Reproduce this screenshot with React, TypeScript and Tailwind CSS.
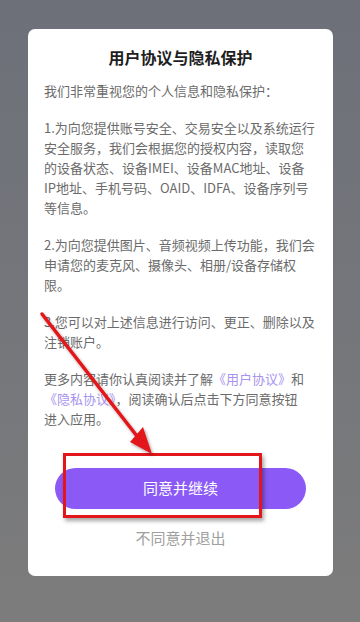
import React from "react";

const font = { fontFamily: '"Noto Sans CJK SC", "Noto Sans", sans-serif' };

export default function App() {
  return (
    <div
      className="relative w-[360px] h-[622px] overflow-hidden bg-gradient-to-b from-[#6d7079] to-[#7c7c7c] pt-[29px]"
      style={font}
    >
      <div className="mx-[28px] w-[305px] h-[547px] rounded-[7px] bg-white px-[16px] pt-[17px] flex flex-col">
        <div className="text-center text-[16px] leading-[22px] font-bold text-[#1e1e1e]">
          用户协议与隐私保护
        </div>
        <div className="mt-[13px] text-[13px] leading-[20px] text-[#6b6b6b] whitespace-nowrap">
          <p>我们非常重视您的个人信息和隐私保护：</p>
          <p className="mt-[17px]">
            1.为向您提供账号安全、交易安全以及系统运行
            <br />
            安全服务，我们会根据您的授权内容，读取您
            <br />
            的设备状态、设备IMEI、设备MAC地址、设备
            <br />
            IP地址、手机号码、OAID、IDFA、设备序列号
            <br />
            等信息。
          </p>
          <p className="mt-[17px]">
            2.为向您提供图片、音频视频上传功能，我们会
            <br />
            申请您的麦克风、摄像头、相册/设备存储权
            <br />
            限。
          </p>
          <p className="mt-[17px]">
            3.您可以对上述信息进行访问、更正、删除以及
            <br />
            注销账户。
          </p>
          <p className="mt-[17px]">
            更多内容请你认真阅读并了解<span className="text-[#a793ef]">《用户协议》</span>和
            <br />
            <span className="text-[#a793ef]">《隐私协议》</span>，阅读确认后点击下方同意按钮
            <br />
            进入应用。
          </p>
        </div>
        <button className="mt-[39px] mx-[11px] h-[41px] rounded-full bg-[#8b59f6] text-white text-[15px] flex items-center justify-center">
          同意并继续
        </button>
        <div className="mt-[19px] text-center text-[15px] leading-[20px] text-[#a0a0a0]">
          不同意并退出
        </div>
      </div>

      {/* annotation rectangle */}
      <div className="absolute left-[63px] top-[453px] w-[199px] h-[65px] border-[3px] border-[#e3161b] shadow-[2px_3px_4px_rgba(0,0,0,0.35)]" />

      {/* annotation arrow */}
      <svg className="absolute left-0 top-0" width="360" height="622" viewBox="0 0 360 622">
        <defs>
          <filter id="sh" x="-20%" y="-20%" width="140%" height="140%">
            <feDropShadow dx="1.5" dy="2" stdDeviation="1.5" floodColor="#000" floodOpacity="0.35" />
          </filter>
        </defs>
        <g filter="url(#sh)">
          <line x1="42" y1="314" x2="140" y2="440" stroke="#e3161b" strokeWidth="3.5" strokeLinecap="round" />
          <polygon points="152,454 130,442 143,427" fill="#e3161b" />
        </g>
      </svg>
    </div>
  );
}
